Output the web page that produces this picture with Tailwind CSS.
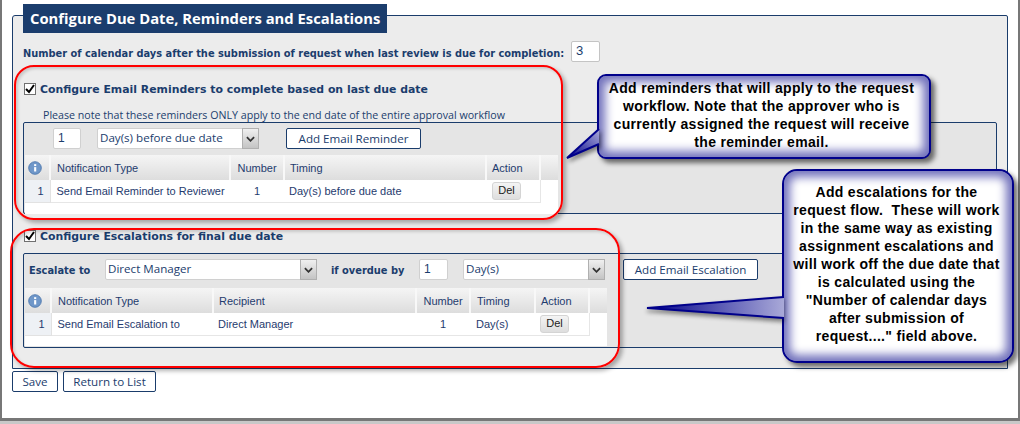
<!DOCTYPE html>
<html lang="en">
  <head>
    <meta charset="UTF-8" />
    <meta name="viewport" content="width=device-width, initial-scale=1.0" />
    <title>Configure Due Date</title>
    <script src="https://cdn.jsdelivr.net/npm/@tailwindcss/browser@4"></script>
  </head>
  <body class="bg-[#c8c8c8] h-[424px] w-[1020px] overflow-hidden font-['Liberation_Sans',sans-serif]">
    <div class="relative bg-white h-[421px] border-l-2 border-r-2 border-b-[3px] border-[#777777] pl-[10px] pt-[15px]">
      <!-- main fieldset -->
      <div class="w-[996px] h-[354px] border border-[#1a3c6b] rounded-tl-[3px] rounded-tr-[2px] bg-[#ececec] px-[10px]">
        <h1 class="-mt-[12px] w-[364px] h-[29px] bg-[#1b3d6d] text-white font-['Open_Sans',sans-serif] font-bold text-[14.8px] leading-[29px] pl-[7px] whitespace-nowrap">Configure Due Date, Reminders and Escalations</h1>

        <div class="mt-[8px] h-[21px] flex items-center text-[#1b3d6d] font-['DejaVu_Sans',sans-serif] font-bold text-[9.85px]">
          <span class="w-[548px] pt-[5px] whitespace-nowrap">Number of calendar days after the submission of request when last review is due for completion:</span>
          <input value="3" class="w-[29px] h-[21px] bg-white border border-[#c4c4c4] rounded-[2px] pl-[4px] pb-[3px] text-[13px] font-normal font-['Liberation_Sans',sans-serif] text-[#1b3d6d] leading-none" />
        </div>

        <label class="mt-[20px] h-[14px] flex items-center gap-[4px] text-[#1b3d6d] font-['DejaVu_Sans',sans-serif] font-bold text-[10.9px] whitespace-nowrap">
          <span class="ml-[1px] w-[12px] h-[12px] bg-white border border-[#707070] flex items-center justify-center">
            <svg viewBox="0 0 10 10" class="w-[10px] h-[10px]"><path d="M1 5l3 3 5-7" fill="none" stroke="#000" stroke-width="2" /></svg>
          </span>
          <span class="pt-[2px]">Configure Email Reminders to complete based on last due date</span>
        </label>
        <p class="mt-[12px] h-[14px] pl-[20px] text-[#1b3d6d] font-['Open_Sans',sans-serif] text-[10.65px] leading-[14px] whitespace-nowrap">Please note that these reminders ONLY apply to the end date of the entire approval workflow</p>

        <!-- reminders panel -->
        <section class="w-[974px] h-[92px] border border-[#1a3c6b] rounded-[2px] bg-[#e5e5e5] pl-px">
          <div class="pt-[5px] h-[26px] flex items-start">
            <input value="1" class="ml-[28px] w-[28px] h-[21px] bg-white border border-[#d0d0d0] rounded-[2px] pl-[4px] pb-[2px] text-[12px] text-[#1b3d6d]" />
            <div class="relative ml-[16px] w-[162px] h-[21px]">
              <select class="block appearance-none w-full h-full bg-white border border-[#d0d0d0] rounded-[2px] pl-[2px] pb-[2px] text-[11.6px] font-['Open_Sans',sans-serif] text-[#1b3d6d]"><option>Day(s) before due date</option></select>
              <span class="absolute right-0 top-0 w-[17px] h-[21px] bg-gradient-to-b from-[#f0f0f0] to-[#c4c4c4] border border-[#b0b0b0] flex items-center justify-center">
                <svg viewBox="0 0 10 6" class="w-[9px] h-[6px]"><path d="M1 1l4 4 4-4" fill="none" stroke="#333" stroke-width="2" /></svg>
              </span>
            </div>
            <button class="ml-[27px] w-[135px] h-[21px] bg-white border border-[#1a3c6b] rounded-[2px] text-[11.6px] font-['Open_Sans',sans-serif] text-[#1b3d6d] leading-none">Add Email Reminder</button>
          </div>
          <div class="mt-[6px] w-[533px] h-[59px] bg-white">
            <table class="table-fixed border-collapse w-[533px] text-[11px] text-[#1f3b6e]">
              <colgroup><col class="w-[25px]" /><col class="w-[180px]" /><col class="w-[54px]" /><col class="w-[202px]" /><col class="w-[54px]" /><col /></colgroup>
              <thead>
                <tr class="h-[25px] bg-gradient-to-b from-[#f5f5f5] to-[#dddddd] text-left font-normal">
                  <th class="border-r-2 border-[#f8f8f8] font-normal pl-[3px]">
                    <svg viewBox="0 0 16 16" class="w-[14px] h-[14px]"><circle cx="8" cy="8" r="7.2" fill="#6f97c9" stroke="#4d77ad" /><rect x="7" y="7" width="2.4" height="5" fill="#fff" /><rect x="7" y="3.6" width="2.4" height="2.2" fill="#fff" /></svg>
                  </th>
                  <th class="border-r-2 border-[#f8f8f8] font-normal pl-[6px] pt-[2px]">Notification Type</th>
                  <th class="border-r-2 border-[#f8f8f8] font-normal text-center pt-[2px]">Number</th>
                  <th class="border-r-2 border-[#f8f8f8] font-normal pl-[5px] pt-[2px]">Timing</th>
                  <th class="border-r-2 border-[#f8f8f8] font-normal pl-[5px] pt-[2px]">Action</th>
                  <th class="font-normal"></th>
                </tr>
              </thead>
              <tbody>
                <tr class="h-[22px]">
                  <td class="border-r border-b border-[#e2e2e2] bg-[#eef1f5] text-right pr-[6px]">1</td>
                  <td class="border-b border-[#e6e6e6] pl-[6px] whitespace-nowrap">Send Email Reminder to Reviewer</td>
                  <td class="border-b border-[#e6e6e6] text-center">1</td>
                  <td class="border-b border-[#e6e6e6] pl-[5px]">Day(s) before due date</td>
                  <td class="border-b border-r border-[#e6e6e6] pl-[6px]"><button class="w-[29px] h-[18px] rounded-[3px] border border-[#d4d4d4] bg-gradient-to-b from-[#f4f4f4] to-[#dedede] text-[11px] text-[#222] leading-none">Del</button></td>
                  <td></td>
                </tr>
              </tbody>
            </table>
          </div>
        </section>

        <label class="mt-[15px] h-[14px] flex items-center gap-[4px] text-[#1b3d6d] font-['DejaVu_Sans',sans-serif] font-bold text-[10.9px] whitespace-nowrap">
          <span class="ml-[1px] w-[12px] h-[12px] bg-white border border-[#707070] flex items-center justify-center">
            <svg viewBox="0 0 10 10" class="w-[10px] h-[10px]"><path d="M1 5l3 3 5-7" fill="none" stroke="#000" stroke-width="2" /></svg>
          </span>
          <span class="pt-[2px]">Configure Escalations for final due date</span>
        </label>

        <!-- escalations panel -->
        <section class="mt-[10px] w-[974px] h-[95px] border border-[#1a3c6b] rounded-[2px] bg-[#e5e5e5] pl-px">
          <div class="pt-[5px] h-[26px] flex items-start">
            <span class="ml-[4px] w-[76px] h-[21px] leading-[23px] text-[#1b3d6d] font-['DejaVu_Sans',sans-serif] font-bold text-[9.85px]">Escalate to</span>
            <div class="relative w-[212px] h-[21px]">
              <select class="block appearance-none w-full h-full bg-white border border-[#d0d0d0] rounded-[2px] pl-[2px] pb-[2px] text-[11.6px] font-['Open_Sans',sans-serif] text-[#1b3d6d]"><option>Direct Manager</option></select>
              <span class="absolute right-0 top-0 w-[17px] h-[21px] bg-gradient-to-b from-[#f0f0f0] to-[#c4c4c4] border border-[#b0b0b0] flex items-center justify-center">
                <svg viewBox="0 0 10 6" class="w-[9px] h-[6px]"><path d="M1 1l4 4 4-4" fill="none" stroke="#333" stroke-width="2" /></svg>
              </span>
            </div>
            <span class="ml-[14px] w-[88px] h-[21px] leading-[23px] text-[#1b3d6d] font-['DejaVu_Sans',sans-serif] font-bold text-[9.85px] whitespace-nowrap">if overdue by</span>
            <input value="1" class="w-[29px] h-[21px] bg-white border border-[#d0d0d0] rounded-[2px] pl-[4px] pb-[2px] text-[12px] text-[#1b3d6d]" />
            <div class="relative ml-[15px] w-[142px] h-[21px]">
              <select class="block appearance-none w-full h-full bg-white border border-[#d0d0d0] rounded-[2px] pl-[2px] pb-[2px] text-[11.6px] font-['Open_Sans',sans-serif] text-[#1b3d6d]"><option>Day(s)</option></select>
              <span class="absolute right-0 top-0 w-[17px] h-[21px] bg-gradient-to-b from-[#f0f0f0] to-[#c4c4c4] border border-[#b0b0b0] flex items-center justify-center">
                <svg viewBox="0 0 10 6" class="w-[9px] h-[6px]"><path d="M1 1l4 4 4-4" fill="none" stroke="#333" stroke-width="2" /></svg>
              </span>
            </div>
            <button class="ml-[18px] w-[135px] h-[21px] bg-white border border-[#1a3c6b] rounded-[2px] text-[11.6px] font-['Open_Sans',sans-serif] text-[#1b3d6d] leading-none">Add Email Escalation</button>
          </div>
          <div class="mt-[8px] w-[582px] h-[58px] bg-white">
            <table class="table-fixed border-collapse w-[582px] text-[11px] text-[#1f3b6e]">
              <colgroup><col class="w-[26px]" /><col class="w-[162px]" /><col class="w-[203px]" /><col class="w-[54px]" /><col class="w-[65px]" /><col class="w-[54px]" /><col /></colgroup>
              <thead>
                <tr class="h-[25px] bg-gradient-to-b from-[#f5f5f5] to-[#dddddd] text-left">
                  <th class="border-r-2 border-[#f8f8f8] font-normal pl-[3px]">
                    <svg viewBox="0 0 16 16" class="w-[14px] h-[14px]"><circle cx="8" cy="8" r="7.2" fill="#6f97c9" stroke="#4d77ad" /><rect x="7" y="7" width="2.4" height="5" fill="#fff" /><rect x="7" y="3.6" width="2.4" height="2.2" fill="#fff" /></svg>
                  </th>
                  <th class="border-r-2 border-[#f8f8f8] font-normal pl-[6px] pt-[2px]">Notification Type</th>
                  <th class="border-r-2 border-[#f8f8f8] font-normal pl-[5px] pt-[2px]">Recipient</th>
                  <th class="border-r-2 border-[#f8f8f8] font-normal text-center pt-[2px]">Number</th>
                  <th class="border-r-2 border-[#f8f8f8] font-normal pl-[6px] pt-[2px]">Timing</th>
                  <th class="border-r-2 border-[#f8f8f8] font-normal pl-[5px] pt-[2px]">Action</th>
                  <th class="font-normal"></th>
                </tr>
              </thead>
              <tbody>
                <tr class="h-[22px]">
                  <td class="border-r border-b border-[#e2e2e2] bg-[#eef1f5] text-right pr-[6px]">1</td>
                  <td class="border-b border-[#e6e6e6] pl-[6px] whitespace-nowrap">Send Email Escalation to</td>
                  <td class="border-b border-[#e6e6e6] pl-[5px]">Direct Manager</td>
                  <td class="border-b border-[#e6e6e6] text-center">1</td>
                  <td class="border-b border-[#e6e6e6] pl-[6px]">Day(s)</td>
                  <td class="border-b border-r border-[#e6e6e6] pl-[5px]"><button class="w-[29px] h-[18px] rounded-[3px] border border-[#d4d4d4] bg-gradient-to-b from-[#f4f4f4] to-[#dedede] text-[11px] text-[#222] leading-none">Del</button></td>
                  <td></td>
                </tr>
              </tbody>
            </table>
          </div>
        </section>
      </div>

      <div class="mt-[2px] flex gap-[5px]">
        <button class="w-[46px] h-[21px] bg-white border border-[#1a3c6b] rounded-[2px] text-[11.6px] font-['Open_Sans',sans-serif] text-[#1b3d6d] leading-none">Save</button>
        <button class="w-[93px] h-[21px] bg-white border border-[#1a3c6b] rounded-[2px] text-[11.6px] font-['Open_Sans',sans-serif] text-[#1b3d6d] leading-none">Return to List</button>
      </div>

      <!-- red annotation outlines, body starts at x=2 -->
      <div class="absolute left-[12px] top-[65px] w-[549px] h-[155px] border-2 border-[#ff0000] rounded-[20px] shadow-[3px_3px_4px_rgba(0,0,0,0.3),inset_2px_2px_3px_rgba(0,0,0,0.15)]"></div>
      <div class="absolute left-[8px] top-[228px] w-[610px] h-[140px] border-2 border-[#ff0000] rounded-[24px] shadow-[3px_3px_4px_rgba(0,0,0,0.3),inset_2px_2px_3px_rgba(0,0,0,0.15)]"></div>

      <!-- callouts -->
      <div class="absolute left-[595px] top-[74px] w-[334px] h-[85px] border-2 border-[#00008b] rounded-[9px] bg-white shadow-[inset_0_0_10px_6px_#7272bc,4px_4px_5px_rgba(0,0,0,0.55)] pt-[3px] pr-[5px] text-center text-black font-bold text-[14px] tracking-[0.31px] leading-[18px]">
        Add reminders that will apply to the request<br />workflow. Note that the approver who is<br />currently assigned the request will receive<br />the reminder email.
      </div>
      <svg class="absolute left-[561px] top-[126px] w-[40px] h-[36px] drop-shadow-[2px_3px_2px_rgba(0,0,0,0.45)]" viewBox="0 0 40 36">
        <defs><linearGradient id="tailA" x1="0" x2="1" y1="1" y2="0"><stop offset="0" stop-color="#00008b" /><stop offset="1" stop-color="#a9a9d8" /></linearGradient></defs>
        <polygon points="36,3 4,32 36,18" fill="url(#tailA)" />
        <path d="M36 3L4 32L36 18" fill="none" stroke="#00008b" stroke-width="2" />
      </svg>
      <div class="absolute left-[780px] top-[169px] w-[232px] h-[194px] border-2 border-[#00008b] rounded-[15px] bg-white shadow-[inset_0_0_10px_6px_#7272bc,4px_4px_5px_rgba(0,0,0,0.55)] pt-[12px] pr-[3px] text-center text-black font-bold text-[14px] tracking-[0.31px] leading-[18px]">
        Add escalations for the<br />request flow.&nbsp; These will work<br />in the same way as existing<br />assignment escalations and<br />will work off the due date that<br />is calculated using the<br />"Number of calendar days<br />after submission of<br />request...." field above.
      </div>
      <svg class="absolute left-[644px] top-[293px] w-[140px] h-[30px] drop-shadow-[0_3px_2px_rgba(0,0,0,0.45)]" viewBox="0 0 140 30">
        <defs><linearGradient id="tailB" x1="0" x2="1" y1="0" y2="0"><stop offset="0" stop-color="#00008b" /><stop offset="1" stop-color="#a9a9d8" /></linearGradient></defs>
        <polygon points="138,4 1,15 138,25" fill="url(#tailB)" />
        <path d="M138 4L1 15L138 25" fill="none" stroke="#00008b" stroke-width="2" />
      </svg>
    </div>
  </body>
</html>
